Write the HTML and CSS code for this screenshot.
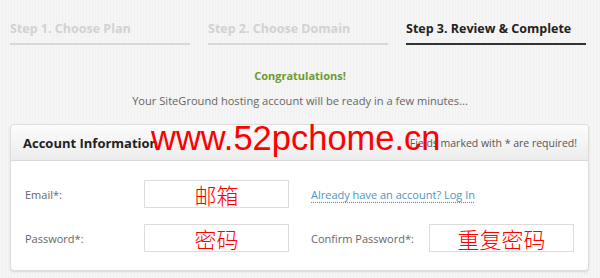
FILE: index.html
```html
<!DOCTYPE html>
<html>
<head>
<meta charset="utf-8">
<link rel="stylesheet" href="styles.css">
</head>
<body>
<div class="steps">
  <div class="step">Step 1. Choose Plan</div>
  <div class="step">Step 2. Choose Domain</div>
  <div class="step active">Step 3. Review &amp; Complete</div>
</div>
<div class="congrats">Congratulations!</div>
<div class="sub">Your SiteGround hosting account will be ready in a few minutes...</div>
<div class="panel">
  <div class="panel-head">
    <span class="title">Account Information</span>
    <span class="req">Fields marked with * are required!</span>
    <span class="mark">www.52pchome.cn</span>
  </div>
  <div class="panel-body">
    <div class="row">
      <span class="label">Email*:</span>
      <span class="input">邮箱</span>
      <a class="link">Already have an account? Log In</a>
    </div>
    <div class="row">
      <span class="label">Password*:</span>
      <span class="input">密码</span>
      <span class="label label2">Confirm Password*:</span>
      <span class="input">重复密码</span>
    </div>
  </div>
</div>
</body>
</html>
```
FILE: styles.css
```css
html, body { margin: 0; padding: 0; }
body {
  width: 600px;
  height: 278px;
  overflow: hidden;
  background: repeating-linear-gradient(90deg, #f5f5f5 0, #f5f5f5 2px, #f1f1f1 2px, #f1f1f1 3px);
  font-family: "Open Sans", "Liberation Sans", sans-serif;
}
.steps {
  display: grid;
  grid-template-columns: 180px 180px 180px;
  column-gap: 18px;
  padding: 20px 10px 0;
}
.step {
  font-size: 12.5px;
  font-weight: 700;
  color: #d2d2d2;
  padding-bottom: 6px;
  border-bottom: 2px solid #d8d8d8;
  line-height: 17px;
}
.step.active { color: #222; border-bottom-color: #333; }
.congrats {
  margin-top: 23px;
  text-align: center;
  font-size: 11px;
  font-weight: 700;
  color: #6d9a32;
  line-height: 16px;
}
.sub {
  margin-top: 9px;
  text-align: center;
  font-size: 11.1px;
  color: #666;
  line-height: 16px;
}
.panel {
  box-sizing: border-box;
  margin: 15px 0 0 10px;
  width: 579px;
  height: 147px;
  border: 1px solid #ddd;
  border-radius: 4px;
  background: #fff;
  box-shadow: 0 1px 2px rgba(0,0,0,0.12);
}
.panel-head {
  position: relative;
  height: 35px;
  border-bottom: 1px solid #d9d9d9;
  background: linear-gradient(#fcfcfc, #ececec);
  border-radius: 4px 4px 0 0;
  display: flex;
  align-items: center;
  justify-content: space-between;
  padding: 0 11px 0 12px;
}
.title { font-size: 13px; font-weight: 700; color: #222; }
.req { font-size: 10.5px; color: #555; }
.mark {
  position: absolute;
  left: 140px;
  top: -7px;
  font-family: "Liberation Sans", Arial, sans-serif;
  font-size: 34.5px;
  color: #ff0000;
  line-height: 40px;
}
.panel-body { padding: 19px 0 0 14px; }
.row {
  display: flex;
  align-items: center;
  height: 28px;
  margin-bottom: 16px;
}
.label { flex: none; width: 119px; font-size: 11px; color: #666; }
.label2 { width: 118px; }
.input {
  flex: none;
  box-sizing: border-box;
  width: 145px;
  height: 28px;
  border: 1px solid #dcdcdc;
  background: #fff;
  color: #f00;
  font-family: "Noto Sans CJK SC", sans-serif;
  font-weight: 300;
  font-size: 22px;
  line-height: 26px;
  text-align: center;
  margin-right: 22px;
}
.link {
  font-size: 11px;
  color: #4b95c4;
  text-decoration: underline dotted #4b95c4;
  text-underline-offset: 3px;
}
```
